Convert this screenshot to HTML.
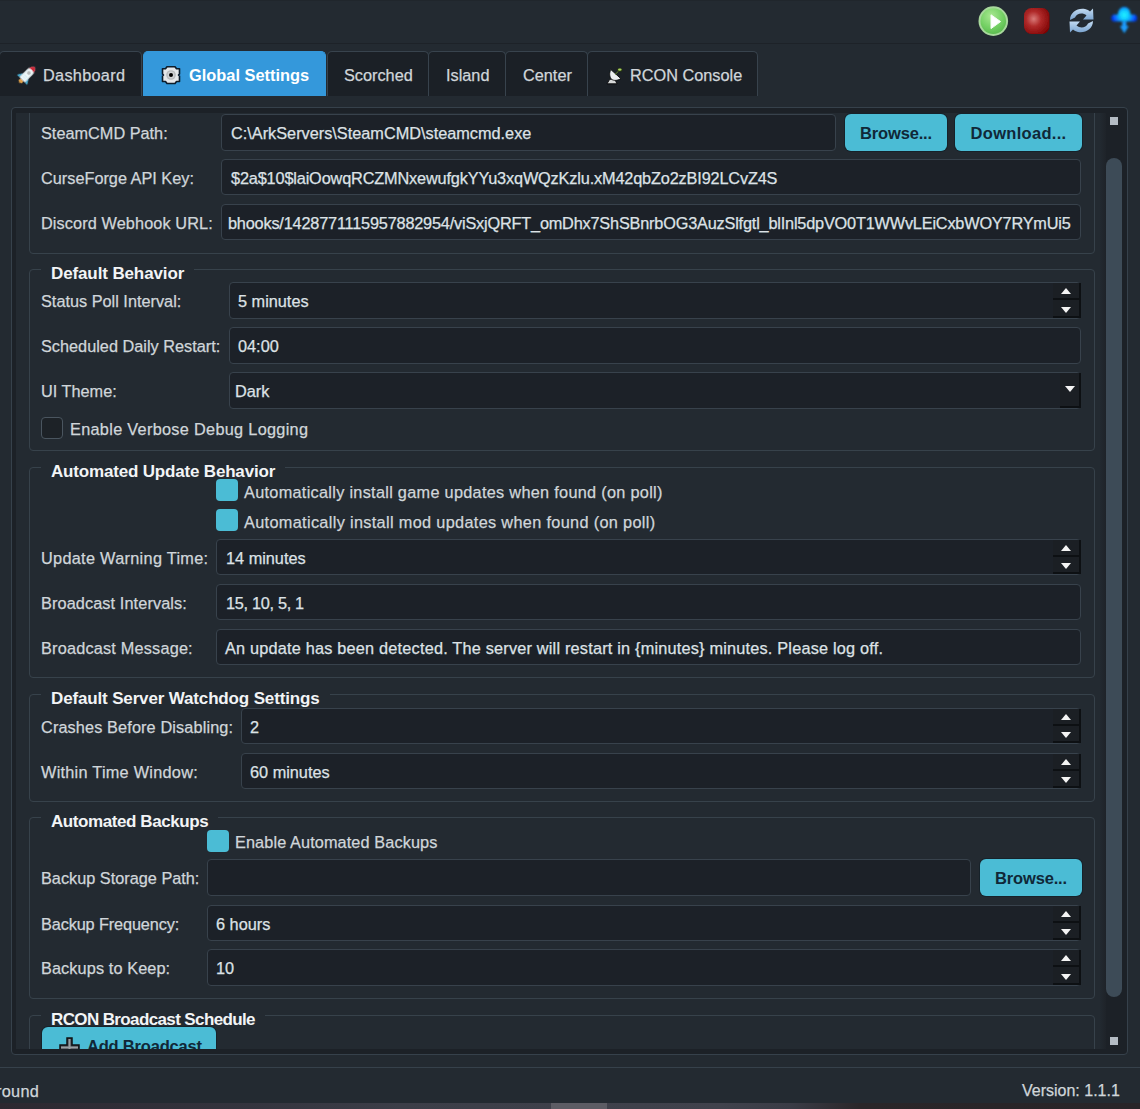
<!DOCTYPE html>
<html><head><meta charset="utf-8">
<style>
html,body{margin:0;padding:0;}
body{width:1140px;height:1109px;overflow:hidden;position:relative;background:#232a31;font-family:"Liberation Sans",sans-serif;font-size:16.3px;color:#d0d6da;-webkit-text-stroke:0.25px currentColor;}
.a{position:absolute;}
.tbline{left:0;top:43px;width:1140px;height:1px;background:#1d2228;}
.tab{position:absolute;top:51px;height:45px;box-sizing:border-box;background:#1b2026;border:1px solid #38434d;border-bottom:none;border-radius:5px 5px 0 0;}
.tt{position:absolute;top:0px;line-height:46px;white-space:nowrap;color:#d0d6da;}
.frame{left:11px;top:107px;width:1117px;height:948px;box-sizing:border-box;border:1px solid #36414b;border-radius:4px;background:#1c2127;overflow:hidden;}
.vp{left:16px;top:113px;width:1106px;height:936px;background:#232a31;overflow:hidden;}
.gb{position:absolute;box-sizing:border-box;border:1px solid #37424b;border-radius:4px;}
.gt{position:absolute;-webkit-text-stroke:0;font-weight:bold;color:#f2f4f6;background:#232a31;padding:0 10px;line-height:22px;letter-spacing:0.1px;white-space:nowrap;font-size:17px;}
.lbl{position:absolute;line-height:38px;height:36px;white-space:nowrap;}
.inp{position:absolute;height:37px;box-sizing:border-box;border:1px solid #38424c;border-radius:4px;background:#1c2128;line-height:37px;white-space:nowrap;overflow:hidden;color:#dde2e6;}
.btn{position:absolute;-webkit-text-stroke:0;height:37px;box-sizing:border-box;border-radius:6px;background:#4bbcd5;box-shadow:0 0 0 1px rgba(12,28,36,0.55);color:#102838;font-weight:bold;text-align:center;line-height:37px;font-size:16.5px;}
.cb{position:absolute;width:22px;height:22px;border-radius:4px;background:#4bbcd5;}
.sb{background:#1b1f24;border-bottom:2px solid #0d1013;border-right:2px solid #0d1013;box-sizing:border-box;}
.tri-u{position:absolute;width:0;height:0;border-left:5px solid transparent;border-right:5px solid transparent;border-bottom:6px solid #f4f4f4;}
.tri-d{position:absolute;width:0;height:0;border-left:5px solid transparent;border-right:5px solid transparent;border-top:6px solid #f4f4f4;}
</style></head><body>

<!-- toolbar -->
<div class="a tbline"></div>
<div class="a" style="left:0;top:0;width:1140px;height:1px;background:#20262c;"></div>
<svg class="a" style="left:975px;top:3px" width="165" height="37" viewBox="975 3 165 37">
  <defs>
    <radialGradient id="gg" cx="0.42" cy="0.3" r="0.75"><stop offset="0" stop-color="#a8e890"/><stop offset="0.6" stop-color="#74d064"/><stop offset="1" stop-color="#58b84c"/></radialGradient>
    <radialGradient id="rg" cx="0.38" cy="0.42" r="0.72"><stop offset="0" stop-color="#d87a78"/><stop offset="0.4" stop-color="#b02a2a"/><stop offset="1" stop-color="#7c0202"/></radialGradient>
    <linearGradient id="bg1" x1="0" y1="0" x2="0" y2="1"><stop offset="0" stop-color="#c4dcf2"/><stop offset="1" stop-color="#7aa4d0"/></linearGradient>
    <radialGradient id="cg" cx="0.5" cy="0.45" r="0.6"><stop offset="0" stop-color="#10f0ff"/><stop offset="0.5" stop-color="#0a9cff"/><stop offset="1" stop-color="#0030f0"/></radialGradient>
    <filter id="bl" x="-20%" y="-20%" width="140%" height="140%"><feGaussianBlur stdDeviation="0.7"/></filter>
    <filter id="bl2" x="-30%" y="-30%" width="160%" height="160%"><feGaussianBlur stdDeviation="1.1"/></filter>
  <radialGradient id="cg2" gradientUnits="userSpaceOnUse" cx="1124.3" cy="15" r="13"><stop offset="0" stop-color="#20f4ff"/><stop offset="0.35" stop-color="#10c8ff"/><stop offset="0.75" stop-color="#0a60ff"/><stop offset="1" stop-color="#0030e8"/></radialGradient>
  </defs>
  <g filter="url(#bl)">
  <circle cx="993.3" cy="21.1" r="14.8" fill="#a8d89c"/>
  <circle cx="993.3" cy="21.1" r="12.8" fill="url(#gg)"/>
  <path d="M991 14.8 L1000.6 21.6 L991 28.6 Z" fill="#ffffff" stroke="#f4fff4" stroke-width="1" stroke-linejoin="round"/>
  <rect x="1024" y="8" width="25.5" height="26" rx="7.5" fill="url(#rg)"/>
  </g>
  <g filter="url(#bl)">
    <path d="M1070 20 C1070 12 1078 7.5 1085 9 C1087 9.5 1089 10.5 1090 11.5 L1093 8.5 L1093.5 19.5 L1083 19.5 L1086.5 15.5 C1083 12.5 1077 13 1075 17.5 Z" fill="url(#bg1)"/>
    <path d="M1093 21 C1093 29 1085 33.5 1078 32 C1076 31.5 1074 30.5 1073 29.5 L1070 32.5 L1069.5 21.5 L1080 21.5 L1076.5 25.5 C1080 28.5 1086 28 1088 23.5 Z" fill="url(#bg1)"/>
  </g>
  <g filter="url(#bl2)">
    <path d="M1113.5 21.5 C1110.5 21 1110.5 15 1114 14.5 L1118 14.5 C1118 9.5 1121 7 1124.3 7 C1127.6 7 1130.6 9.5 1130.6 14.5 L1134.5 14.5 C1138 15 1138 21 1135 21.5 Z" fill="url(#cg2)"/>
    <path d="M1122.2 21.5 L1126.4 21.5 L1126.4 26 L1128.8 26 L1124.3 33.2 L1119.8 26 L1122.2 26 Z" fill="#1a9cff"/>
  </g>
</svg>

<!-- tabs -->
<div class="tab" style="left:-1px;width:143px;">
  <svg class="a" style="left:14px;top:9px" width="30" height="30" viewBox="0 0 30 30">
    <g transform="translate(13.6,13.3) rotate(45) scale(0.9)" filter="url(#bl)">
      <ellipse cx="0" cy="10.6" rx="2.6" ry="2.4" fill="#e0a048"/>
      <path d="M-3.8,2 L-7.4,7.5 L-7.2,9.2 L-3.8,8 Z" fill="#4aaed2"/>
      <path d="M3.8,2 L7.4,7.5 L7.2,9.2 L3.8,8 Z" fill="#4aaed2"/>
      <path d="M-4.2,8.5 L-4.2,-3 Q-4.2,-9 0,-11.5 Q4.2,-9 4.2,-3 L4.2,8.5 Z" fill="#eef8fa"/>
      <path d="M-3.7,-6.2 Q-3,-9.8 0,-11.7 Q3,-9.8 3.7,-6.2 Q0,-7.2 -3.7,-6.2 Z" fill="#cc2a3a"/>
      <circle cx="0" cy="-2.2" r="2.1" fill="#b4b8b8"/>
      <path d="M-2.5,3 L2.5,3 M-2.5,5.5 L2.5,5.5" stroke="#c8e4ee" stroke-width="0.8"/>
    </g>
  </svg>
  <div class="tt" style="left:43px;letter-spacing:0.29px;">Dashboard</div>
</div>
<div class="tab" style="left:143px;width:183px;background:#3498db;border-color:#3498db;">
  <svg class="a" style="left:12px;top:9px" width="30" height="30" viewBox="0 0 30 30">
    <g filter="url(#bl)">
    <path d="M11 5.8 L19 5.8 L20.5 7.8 L23.5 7.8 L23.5 13 L22.5 14 L23.5 15 L23.5 20.5 L20.5 20.5 L19 22.5 L11 22.5 L9.5 20.5 L6.5 20.5 L6.5 15 L7.5 14 L6.5 13 L6.5 7.8 L9.5 7.8 Z" fill="#e6e8ea" stroke="#0c1a2a" stroke-width="1.6" stroke-linejoin="round"/>
    <circle cx="15" cy="14" r="4.8" fill="#b8babc"/>
    <circle cx="15" cy="14" r="3.4" fill="#d0d2d4"/>
    <circle cx="15" cy="14" r="2" fill="#000"/>
    </g>
  </svg>
  <div class="tt" style="left:45px;font-weight:bold;color:#fff;font-size:16.4px;-webkit-text-stroke:0;">Global Settings</div>
</div>
<div class="tab" style="left:327px;width:102px;"><div class="tt" style="left:16px;">Scorched</div></div>
<div class="tab" style="left:428px;width:78px;"><div class="tt" style="left:17px;">Island</div></div>
<div class="tab" style="left:505px;width:83px;"><div class="tt" style="left:17px;">Center</div></div>
<div class="tab" style="left:587px;width:171px;">
  <svg class="a" style="left:13px;top:9px" width="30" height="30" viewBox="0 0 30 30">
    <g filter="url(#bl)">
    <path d="M6 22.8 L8.7 18.3 L13.8 18.3 L16 22.8 Z" fill="#d8dada" stroke="#08090a" stroke-width="0.9"/>
    <path d="M9.8 8.5 C8.2 11.5 8.2 16 10.5 18.2 C13 20.2 17 19.5 19.8 17.6 Z" fill="#eceef0" stroke="#08090a" stroke-width="0.9"/>
    <path d="M14 13.5 L17.5 10.2" stroke="#6a8a30" stroke-width="1"/>
    <ellipse cx="18.8" cy="8.8" rx="2.6" ry="1.9" fill="#2a3a10"/>
    <ellipse cx="18.8" cy="8.6" rx="1.8" ry="1.2" fill="#a8d060"/>
    </g>
  </svg>
  <div class="tt" style="left:42px;">RCON Console</div>
</div>

<!-- frame -->
<div class="a frame"></div>
<div class="a vp" id="vp">
<div class="a" style="left:-16px;top:-113px;width:1140px;height:1109px;">
<div class="gb" style="left:29px;top:60px;width:1066px;height:194px;"></div>
<div class="lbl" style="left:41px;top:114px;">SteamCMD Path:</div>
<div class="inp" style="left:221px;top:114px;width:615px;height:37px;padding-left:9px;">C:\ArkServers\SteamCMD\steamcmd.exe</div>
<div class="btn" style="left:845px;top:114px;width:102px;height:37px;line-height:39px;"><span style="letter-spacing:-0.15px">Browse...</span></div>
<div class="btn" style="left:955px;top:114px;width:127px;height:37px;line-height:39px;"><span style="letter-spacing:0.3px">Download...</span></div>
<div class="lbl" style="left:41px;top:159px;">CurseForge API Key:</div>
<div class="inp" style="left:221px;top:159px;width:860px;height:36px;padding-left:9px;letter-spacing:-0.155px;">$2a$10$laiOowqRCZMNxewufgkYYu3xqWQzKzlu.xM42qbZo2zBI92LCvZ4S</div>
<div class="lbl" style="left:41px;top:204px;letter-spacing:0.1px;">Discord Webhook URL:</div>
<div class="inp" style="left:221px;top:204px;width:860px;height:36px;padding-left:6px;letter-spacing:-0.19px;">bhooks/1428771115957882954/viSxjQRFT_omDhx7ShSBnrbOG3AuzSlfgtl_blInl5dpVO0T1WWvLEiCxbWOY7RYmUi5</div>
<div class="gb" style="left:29px;top:269px;width:1066px;height:182px;"></div>
<div class="gt" style="left:41px;top:263px;letter-spacing:-0.12px;">Default Behavior</div>
<div class="lbl" style="left:41px;top:282px;">Status Poll Interval:</div>
<div class="inp" style="left:229px;top:282px;width:852px;height:37px;padding-left:8px;">5 minutes</div>
<div class="a sb" style="left:1053px;top:283px;width:28px;height:17px;"></div>
<div class="a sb" style="left:1053px;top:300px;width:28px;height:18px;"></div>
<div class="tri-u" style="left:1061px;top:288px;"></div>
<div class="tri-d" style="left:1061px;top:307px;"></div>
<div class="lbl" style="left:41px;top:327px;">Scheduled Daily Restart:</div>
<div class="inp" style="left:229px;top:327px;width:852px;height:37px;padding-left:8px;">04:00</div>
<div class="lbl" style="left:41px;top:372px;">UI Theme:</div>
<div class="inp" style="left:229px;top:372px;width:852px;height:37px;padding-left:5px;">Dark</div>
<div class="a sb" style="left:1060px;top:373px;width:21px;height:35px;"></div>
<div class="a" style="left:1065px;top:386px;width:0;height:0;border-left:5.5px solid transparent;border-right:5.5px solid transparent;border-top:6px solid #f4f4f4;"></div>
<div class="a" style="left:41px;top:417px;width:22px;height:22px;box-sizing:border-box;border:1.5px solid #4a555f;border-radius:4px;background:#1d2227;"></div>
<div class="lbl" style="left:70px;top:410px;letter-spacing:0.3px;">Enable Verbose Debug Logging</div>
<div class="gb" style="left:29px;top:467px;width:1066px;height:211px;"></div>
<div class="gt" style="left:41px;top:461px;letter-spacing:-0.18px;">Automated Update Behavior</div>
<div class="cb" style="left:216px;top:479px;"></div>
<div class="lbl" style="left:244px;top:473px;letter-spacing:0.29px;">Automatically install game updates when found (on poll)</div>
<div class="cb" style="left:216px;top:509px;"></div>
<div class="lbl" style="left:244px;top:503px;letter-spacing:0.33px;">Automatically install mod updates when found (on poll)</div>
<div class="lbl" style="left:41px;top:539px;letter-spacing:0.3px;">Update Warning Time:</div>
<div class="inp" style="left:216px;top:539px;width:865px;height:36px;padding-left:9px;">14 minutes</div>
<div class="a sb" style="left:1053px;top:540px;width:28px;height:17px;"></div>
<div class="a sb" style="left:1053px;top:557px;width:28px;height:17px;"></div>
<div class="tri-u" style="left:1061px;top:545px;"></div>
<div class="tri-d" style="left:1061px;top:563px;"></div>
<div class="lbl" style="left:41px;top:584px;letter-spacing:0.1px;">Broadcast Intervals:</div>
<div class="inp" style="left:216px;top:584px;width:865px;height:36px;padding-left:9px;letter-spacing:-0.3px;">15, 10, 5, 1</div>
<div class="lbl" style="left:41px;top:629px;letter-spacing:0.19px;">Broadcast Message:</div>
<div class="inp" style="left:216px;top:629px;width:865px;height:36px;padding-left:8px;letter-spacing:0.2px;">An update has been detected. The server will restart in {minutes} minutes. Please log off.</div>
<div class="gb" style="left:29px;top:694px;width:1066px;height:108px;"></div>
<div class="gt" style="left:41px;top:688px;letter-spacing:-0.15px;">Default Server Watchdog Settings</div>
<div class="lbl" style="left:41px;top:708px;letter-spacing:0.12px;">Crashes Before Disabling:</div>
<div class="inp" style="left:241px;top:708px;width:840px;height:36px;padding-left:8px;">2</div>
<div class="a sb" style="left:1053px;top:709px;width:28px;height:17px;"></div>
<div class="a sb" style="left:1053px;top:726px;width:28px;height:17px;"></div>
<div class="tri-u" style="left:1061px;top:714px;"></div>
<div class="tri-d" style="left:1061px;top:732px;"></div>
<div class="lbl" style="left:41px;top:753px;letter-spacing:0.26px;">Within Time Window:</div>
<div class="inp" style="left:241px;top:753px;width:840px;height:36px;padding-left:8px;">60 minutes</div>
<div class="a sb" style="left:1053px;top:754px;width:28px;height:17px;"></div>
<div class="a sb" style="left:1053px;top:771px;width:28px;height:17px;"></div>
<div class="tri-u" style="left:1061px;top:759px;"></div>
<div class="tri-d" style="left:1061px;top:777px;"></div>
<div class="gb" style="left:29px;top:817px;width:1066px;height:182px;"></div>
<div class="gt" style="left:41px;top:811px;letter-spacing:-0.42px;">Automated Backups</div>
<div class="cb" style="left:207px;top:830px;"></div>
<div class="lbl" style="left:235px;top:823px;letter-spacing:0.1px;">Enable Automated Backups</div>
<div class="lbl" style="left:41px;top:859px;">Backup Storage Path:</div>
<div class="inp" style="left:207px;top:859px;width:764px;height:37px;padding-left:8px;"></div>
<div class="btn" style="left:980px;top:859px;width:102px;height:37px;line-height:39px;"><span style="letter-spacing:-0.15px">Browse...</span></div>
<div class="lbl" style="left:41px;top:905px;letter-spacing:-0.13px;">Backup Frequency:</div>
<div class="inp" style="left:207px;top:905px;width:874px;height:36px;padding-left:8px;">6 hours</div>
<div class="a sb" style="left:1053px;top:906px;width:28px;height:17px;"></div>
<div class="a sb" style="left:1053px;top:923px;width:28px;height:17px;"></div>
<div class="tri-u" style="left:1061px;top:911px;"></div>
<div class="tri-d" style="left:1061px;top:929px;"></div>
<div class="lbl" style="left:41px;top:949px;letter-spacing:0.1px;">Backups to Keep:</div>
<div class="inp" style="left:207px;top:949px;width:874px;height:37px;padding-left:8px;">10</div>
<div class="a sb" style="left:1053px;top:950px;width:28px;height:17px;"></div>
<div class="a sb" style="left:1053px;top:967px;width:28px;height:18px;"></div>
<div class="tri-u" style="left:1061px;top:955px;"></div>
<div class="tri-d" style="left:1061px;top:974px;"></div>
<div class="gb" style="left:29px;top:1015px;width:1066px;height:186px;"></div>
<div class="gt" style="left:41px;top:1009px;letter-spacing:-0.62px;">RCON Broadcast Schedule</div>
<div class="btn" style="left:42px;top:1027px;width:174px;height:40px;"></div>
<svg class="a" style="left:58px;top:1035px" width="24" height="24" viewBox="0 0 24 24"><path d="M9 3 h5 v7 h7 v5 h-7 v7 h-5 v-7 h-7 v-5 h7 z" fill="#3a3f44" stroke="#101214" stroke-width="1.5"/><path d="M10.5 4 h2 v7.5 h7.5 v2 h-7.5 v7.5 h-2 v-7.5 h-7.5 v-2 h7.5 z" fill="#9aa0a4"/></svg>
<div class="a" style="left:87px;top:1036px;-webkit-text-stroke:0;font-weight:bold;color:#102838;font-size:16.5px;line-height:20px;letter-spacing:-0.2px;white-space:nowrap;">Add Broadcast</div>
<div class="a" style="left:1100px;top:113px;width:6px;height:936px;background:linear-gradient(to right,#222930,#1e2329);"></div>
<div class="a" style="left:1106px;top:113px;width:16px;height:936px;background:#1c2127;"></div>
<div class="a" style="left:1110px;top:117px;width:8px;height:8px;background:#b4bcc4;"></div>
<div class="a" style="left:1106px;top:158px;width:16px;height:839px;background:#3d4b57;border-radius:8px;"></div>
<div class="a" style="left:1110px;top:1037px;width:8px;height:8px;background:#b4bcc4;"></div>
</div>
</div>

<!-- status bar -->
<div class="a" style="left:0;top:1067px;width:1140px;height:1px;background:#36414b;"></div>
<div class="a" style="left:-4px;top:1079px;line-height:24px;letter-spacing:0.3px;">round</div>
<div class="a" style="left:1022px;top:1079px;line-height:24px;font-size:16px;">Version: 1.1.1</div>
<div class="a" style="left:0;top:1103px;width:1140px;height:6px;background:linear-gradient(to right,#2c2830 0px,#34343e 250px,#3c3e48 400px,#40424c 720px,#3a3c46 790px,#2a2629 860px,#282428 1140px);"></div>
<div class="a" style="left:551px;top:1103px;width:56px;height:6px;background:#5c5c64;"></div>

</body></html>
